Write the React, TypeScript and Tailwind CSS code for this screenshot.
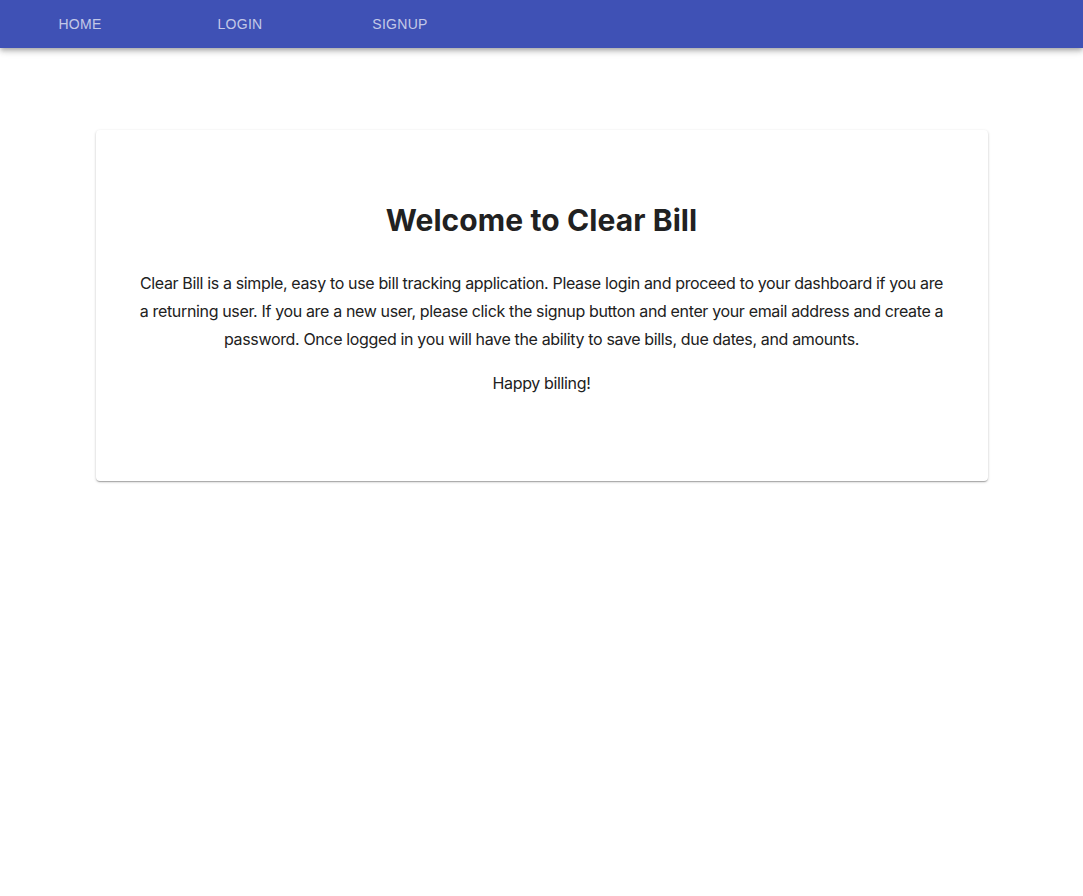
export default function App() {
  const tabs = ["Home", "Login", "Signup"];
  return (
    <div className="min-h-screen bg-white font-['Inter',sans-serif] text-[#212121]">
      <header className="h-12 bg-[#3f51b5] shadow-[0_2px_4px_-1px_rgba(0,0,0,0.2),0_4px_5px_0_rgba(0,0,0,0.14),0_1px_10px_0_rgba(0,0,0,0.12)]">
        <nav className="flex h-full">
          {tabs.map((t) => (
            <a
              key={t}
              href="#"
              className="flex w-40 items-center justify-center font-['Liberation_Sans',Arial,sans-serif] text-sm uppercase tracking-[0.02em] text-white/70"
            >
              {t}
            </a>
          ))}
        </nav>
      </header>

      <main className="pt-[82px]">
        <div className="mx-auto w-[892px] rounded bg-white px-10 pt-[70px] pb-[84px] text-center shadow-[0_1px_3px_0_rgba(0,0,0,0.2),0_1px_1px_0_rgba(0,0,0,0.14),0_2px_1px_-1px_rgba(0,0,0,0.12)]">
          <h1 className="text-[30px] font-bold leading-10 tracking-[0.003em]">Welcome to Clear Bill</h1>
          <p className="mt-[29px] text-base leading-7 tracking-[-0.022em]">
            Clear Bill is a simple, easy to use bill tracking application. Please login and proceed to your dashboard if you are
            a returning user. If you are a new user, please click the signup button and enter your email address and create a
            password. Once logged in you will have the ability to save bills, due dates, and amounts.
          </p>
          <p className="mt-4 text-base leading-7 tracking-[-0.022em]">Happy billing!</p>
        </div>
      </main>
    </div>
  );
}
